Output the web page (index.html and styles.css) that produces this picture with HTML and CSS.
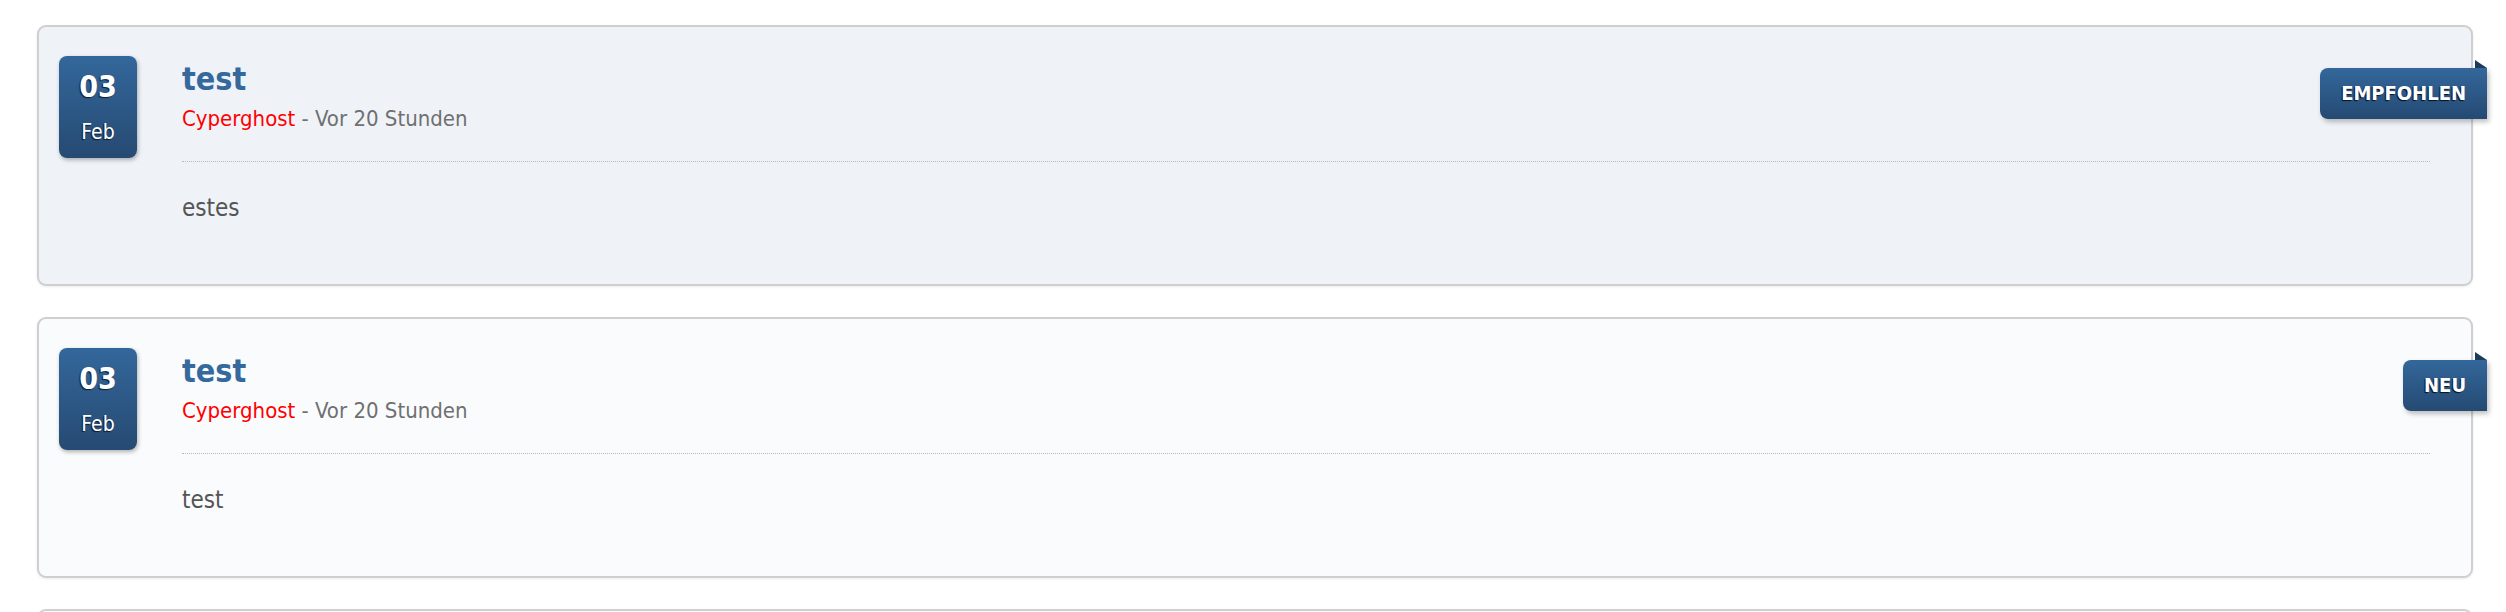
FILE: index.html
```html
<!DOCTYPE html>
<html lang="de">
<head>
<meta charset="utf-8">
<title>News</title>
<link rel="stylesheet" href="styles.css">
</head>
<body>
<div class="list">
  <article class="card card--featured">
    <div class="date"><span class="day">03</span><span class="month">Feb</span></div>
    <div class="content">
      <div class="head">
        <h2 class="title">test</h2>
        <div class="meta"><span class="author">Cyperghost</span> - Vor 20 Stunden</div>
      </div>
      <p class="text">estes</p>
    </div>
    <span class="ribbon">EMPFOHLEN</span>
  </article>
  <article class="card">
    <div class="date"><span class="day">03</span><span class="month">Feb</span></div>
    <div class="content">
      <div class="head">
        <h2 class="title">test</h2>
        <div class="meta"><span class="author">Cyperghost</span> - Vor 20 Stunden</div>
      </div>
      <p class="text">test</p>
    </div>
    <span class="ribbon">NEU</span>
  </article>
  <article class="card card--next"></article>
</div>
</body>
</html>
```

FILE: styles.css
```css
html, body {
  margin: 0;
  padding: 0;
  height: 612px;
  overflow: hidden;
  background: #ffffff;
}

body {
  font-family: "DejaVu Sans Condensed", "DejaVu Sans", sans-serif;
}

.list {
  padding: 25px 33px 0 37px;
}

.card {
  position: relative;
  display: flex;
  align-items: flex-start;
  gap: 45px;
  padding: 29px 41px 61px 20px;
  margin-bottom: 31px;
  background: #fafbfd;
  border: 2px solid #cfcfcf;
  border-radius: 9px;
  box-shadow: 0 1px 3px rgba(0, 0, 0, 0.08);
}

.card--featured {
  background: #eff3f8;
}

.card--next {
  height: 167px;
}

.date {
  flex: none;
  width: 78px;
  height: 102px;
  box-sizing: border-box;
  padding-top: 14px;
  display: flex;
  flex-direction: column;
  align-items: center;
  color: #ffffff;
  background: linear-gradient(to bottom, #33679b, #264a72);
  border-radius: 8px;
  box-shadow: 1px 2px 4px rgba(0, 0, 0, 0.3);
  text-shadow: -1px 1px 1px rgba(0, 0, 0, 0.7);
}

.day {
  font-size: 30px;
  font-weight: bold;
  line-height: 34px;
}

.month {
  margin-top: 16px;
  font-size: 21px;
  line-height: 24px;
}

.content {
  flex: 1;
  padding-top: 4px;
}

.head {
  padding-bottom: 30px;
  border-bottom: 1px dotted #b8b8b8;
}

.title {
  margin: 0;
  font-size: 32px;
  line-height: 38px;
  font-weight: bold;
  color: #35699d;
}

.meta {
  margin-top: 8px;
  font-size: 22px;
  line-height: 25px;
  color: #707070;
}

.author {
  color: #ff0000;
}

.text {
  margin: 32px 0 0;
  font-size: 24px;
  line-height: 29px;
  color: #555555;
}

.ribbon {
  position: absolute;
  top: 41px;
  right: -16px;
  height: 51px;
  padding: 0 21px;
  line-height: 51px;
  font-size: 20px;
  font-weight: bold;
  color: #ffffff;
  text-shadow: -1px 1px 1px rgba(0, 0, 0, 0.8);
  background: linear-gradient(to bottom, #33679b, #254a73);
  border-radius: 8px 0 0 8px;
  box-shadow: 2px 3px 5px rgba(0, 0, 0, 0.25);
}

.ribbon::after {
  content: "";
  position: absolute;
  top: -8px;
  right: 0;
  width: 0;
  height: 0;
  border-bottom: 8px solid #1d3a5c;
  border-right: 12px solid transparent;
}
```
